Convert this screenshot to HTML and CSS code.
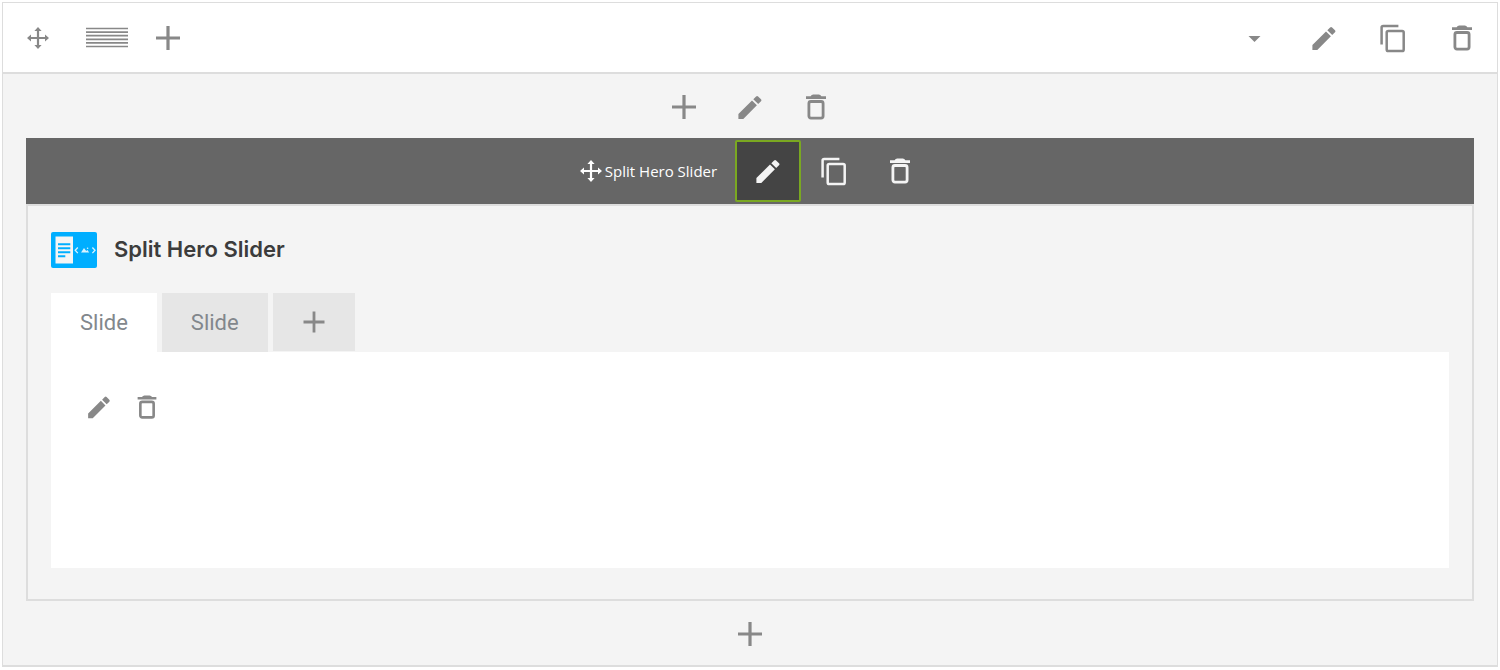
FILE: index.html
```
<!DOCTYPE html>
<html lang="en">
<head>
  <meta charset="UTF-8">
  <title>Split Hero Slider</title>
  <meta name="viewport" content="width=device-width, initial-scale=1.0">
  <link rel="stylesheet" href="styles.css">
</head>
<body>
<svg class="sprite" aria-hidden="true">
  <symbol id="i-move" viewBox="0 0 32 32">
    <path d="M16 7v18M7 16h18" stroke="currentColor" stroke-width="2.2" fill="none"/>
    <path d="M16 5l3.6 4h-7.2zM16 27l3.6-4h-7.2zM5 16l4-3.6v7.2zM27 16l-4-3.6v7.2z" fill="currentColor"/>
  </symbol>
  <symbol id="i-lines" viewBox="0 0 42 22">
    <path d="M0 1.5h42M0 5.1h42M0 8.7h42M0 12.3h42M0 15.9h42M0 19.5h42" stroke="currentColor" stroke-width="1.7"/>
  </symbol>
  <symbol id="i-plus" viewBox="0 0 32 32">
    <path d="M16 4v24M4 16h24" stroke="currentColor" stroke-width="3.2"/>
  </symbol>
  <symbol id="i-caret" viewBox="0 0 32 32">
    <path d="M9.5 14h12l-6 6z" fill="currentColor"/>
  </symbol>
  <symbol id="i-pencil" viewBox="0 0 32 32">
    <path d="M4.4 23v4.9h4.9L22.9 14.3 18 9.4zM27 10.3a1.4 1.4 0 0 0 0-2l-2.9-2.9a1.4 1.4 0 0 0-2 0l-2.8 2.8 4.9 4.9z" fill="currentColor"/>
  </symbol>
  <symbol id="i-copy" viewBox="0 0 32 32">
    <path d="M4.6 22.5V5.6q0-1.6 1.6-1.6h15.2" stroke="currentColor" stroke-width="2.5" fill="none"/>
    <rect x="9.7" y="9" width="17" height="20" rx="1.6" stroke="currentColor" stroke-width="2.5" fill="none"/>
  </symbol>
  <symbol id="i-trash" viewBox="0 0 32 32">
    <path d="M6 5.2h4.6q1-1.6 2.6-1.6h5.6q1.6 0 2.6 1.6H26v2.7H6z" fill="currentColor"/>
    <rect x="8.9" y="10.5" width="14.2" height="16.6" rx="2" stroke="currentColor" stroke-width="2.8" fill="none"/>
  </symbol>
</svg>

<section class="row">
  <header class="row-header">
    <div class="row-tools">
      <button type="button" class="icon-btn" aria-label="Move row"><svg class="icon"><use href="#i-move"/></svg></button>
      <button type="button" class="icon-btn" aria-label="Row layout"><svg class="icon icon-lines"><use href="#i-lines"/></svg></button>
      <button type="button" class="icon-btn icon-btn-narrow" aria-label="Add column"><svg class="icon"><use href="#i-plus"/></svg></button>
    </div>
    <div class="row-tools">
      <button type="button" class="icon-btn" aria-label="Toggle row"><svg class="icon"><use href="#i-caret"/></svg></button>
      <button type="button" class="icon-btn" aria-label="Edit row"><svg class="icon"><use href="#i-pencil"/></svg></button>
      <button type="button" class="icon-btn" aria-label="Clone row"><svg class="icon"><use href="#i-copy"/></svg></button>
      <button type="button" class="icon-btn" aria-label="Delete row"><svg class="icon"><use href="#i-trash"/></svg></button>
    </div>
  </header>

  <div class="column">
    <div class="column-controls">
      <button type="button" class="icon-btn" aria-label="Add element"><svg class="icon"><use href="#i-plus"/></svg></button>
      <button type="button" class="icon-btn" aria-label="Edit column"><svg class="icon"><use href="#i-pencil"/></svg></button>
      <button type="button" class="icon-btn" aria-label="Delete column"><svg class="icon"><use href="#i-trash"/></svg></button>
    </div>

    <article class="element">
      <div class="element-bar">
        <button type="button" class="element-move"><svg class="icon"><use href="#i-move"/></svg>Split Hero Slider</button>
        <button type="button" class="icon-btn active" aria-label="Edit element"><svg class="icon"><use href="#i-pencil"/></svg></button>
        <button type="button" class="icon-btn" aria-label="Clone element"><svg class="icon"><use href="#i-copy"/></svg></button>
        <button type="button" class="icon-btn" aria-label="Delete element"><svg class="icon"><use href="#i-trash"/></svg></button>
      </div>

      <div class="element-body">
        <div class="element-title">
          <svg class="element-logo" viewBox="0 0 46 36" aria-hidden="true">
            <rect width="46" height="36" rx="2" fill="#00aeff"/>
            <rect x="4.5" y="4.5" width="17.5" height="27" fill="#f4f4f4"/>
            <path d="M7 12.3h12.3M7 16.3h12.3M7 20.3h12.3M7 24.3h7.3" stroke="#00aeff" stroke-width="2"/>
            <path d="M26.8 15.5l-2.6 2.8 2.6 2.8M41.4 15.5l2.6 2.8-2.6 2.8" stroke="#d9f3ff" stroke-width="1.3" fill="none"/>
            <path d="M30 20.6l3-4.6 2.2 3 1.2-1 1.8 2.6z" fill="#d9f3ff"/>
            <circle cx="36.6" cy="16.3" r="0.8" fill="#d9f3ff"/>
          </svg>
          <h2>Split Hero Slider</h2>
        </div>

        <div class="tabs" role="tablist">
          <button type="button" class="tab active" role="tab" aria-selected="true">Slide</button>
          <button type="button" class="tab" role="tab" aria-selected="false">Slide</button>
          <button type="button" class="tab tab-add" aria-label="Add slide"><svg class="icon"><use href="#i-plus"/></svg></button>
        </div>
        <div class="tab-panel" role="tabpanel">
          <button type="button" class="icon-btn" aria-label="Edit slide"><svg class="icon"><use href="#i-pencil"/></svg></button>
          <button type="button" class="icon-btn" aria-label="Delete slide"><svg class="icon"><use href="#i-trash"/></svg></button>
        </div>
      </div>
    </article>

    <div class="column-controls">
      <button type="button" class="icon-btn" aria-label="Append element"><svg class="icon"><use href="#i-plus"/></svg></button>
    </div>
  </div>
</section>
</body>
</html>
```
FILE: styles.css
```
* {
  box-sizing: border-box;
}
body {
  margin: 0;
  padding: 2px 2px 3px;
  background: #fff;
  font-family: Inter, "Liberation Sans", sans-serif;
  color: #3c3c3c;
}
button {
  margin: 0;
  padding: 0;
  border: none;
  background: none;
  color: inherit;
  font: inherit;
  cursor: pointer;
}

.sprite {
  display: none;
}
.icon {
  display: block;
  flex: none;
  width: 32px;
  height: 32px;
}
.icon-lines {
  width: 42px;
  height: 22px;
}
.icon-btn {
  display: flex;
  align-items: center;
  justify-content: center;
  width: 66px;
  height: 64px;
  color: #888;
}

.row {
  border: 1px solid #ddd;
  border-bottom-width: 2px;
  background: #f4f4f4;
}
.row-header {
  display: flex;
  justify-content: space-between;
  padding-right: 1px;
  background: #fff;
  border-bottom: 2px solid #ddd;
}
.row-tools {
  display: flex;
}
.row-tools .icon-btn {
  width: 69px;
  height: 69px;
}
.row-tools .icon-btn-narrow {
  width: 54px;
}

.column {
  padding: 0 23px;
}
.column-controls {
  display: flex;
  justify-content: center;
  padding-top: 2px;
}
.column-controls .icon-btn {
  height: 62px;
}

.element-bar {
  display: flex;
  justify-content: center;
  padding: 2px 0;
  background: #666;
}
.element-bar .icon-btn {
  height: 62px;
  color: #f4f4f4;
}
.element-bar .icon-btn.active {
  background: #444;
  border: 2px solid #7aa821;
  border-radius: 2px;
}
.element-move {
  display: flex;
  align-items: center;
  padding: 0 18px 0 8px;
  color: #fff;
  font-family: "Open Sans", "Noto Sans", sans-serif;
  font-size: 15px;
  line-height: 20px;
}
.element-move .icon {
  margin-right: -2px;
}

.element-body {
  padding: 26px 23px 31px;
  border: 2px solid #ddd;
}
.element-title {
  display: flex;
  align-items: center;
  gap: 17px;
  margin-bottom: 25px;
}
.element-title h2 {
  margin: 0;
  padding-bottom: 2px;
  font-size: 22px;
  line-height: 28px;
  font-weight: 600;
}
.element-logo {
  width: 46px;
  height: 36px;
}

.tabs {
  display: flex;
  align-items: flex-start;
  gap: 5px;
}
.tab {
  height: 59px;
  padding: 0 29px;
  background: #e6e6e6;
  color: #82878c;
  font-family: Roboto, Inter, sans-serif;
  font-size: 22px;
}
.tab.active {
  background: #fff;
}
.tab-add {
  height: 58px;
  padding: 0 27px;
  color: #888;
}
.tab-add .icon {
  width: 28px;
  height: 28px;
}
.tab-panel {
  display: flex;
  min-height: 216px;
  padding: 31px 24px;
  background: #fff;
}
.tab-panel .icon-btn {
  width: 48px;
  height: 48px;
}
.tab-panel .icon {
  width: 30px;
  height: 30px;
}
```
